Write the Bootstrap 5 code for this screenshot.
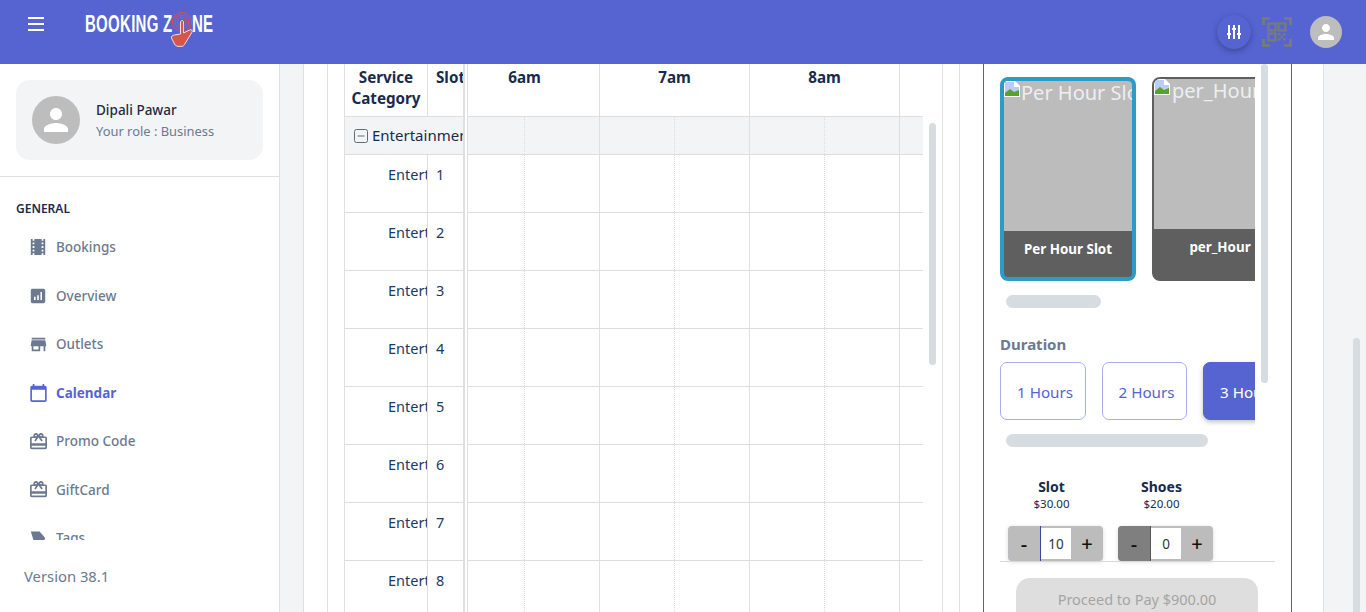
<!DOCTYPE html>
<html lang="en">
<head>
    <meta charset="UTF-8">
    <meta name="viewport" content="width=device-width, initial-scale=1.0">
    <title>Booking Zone</title>
    <link href="https://cdn.jsdelivr.net/npm/bootstrap@5.3.0/dist/css/bootstrap.min.css" rel="stylesheet">
    <style>
        html, body { height: 100%; overflow: hidden; }
        body { font-family: "Noto Sans", "Open Sans", sans-serif; color: #172b4d; background: #f3f4f6; }
        .top-bar { height: 64px; background: #5664d2; padding-left: 28px; padding-right: 24px; flex-shrink: 0; }
        .burger { width: 16px; height: 14px; display: flex; flex-direction: column; justify-content: space-between; margin-top: -17px; }
        .burger span { height: 2px; background: #fff; display: block; }
        .brand { margin-left: 41px; margin-top: -17px; height: 20px; width: 128px; position: relative; color: #fff; font-family: "Liberation Sans", sans-serif; font-size: 23.5px; font-weight: 700; line-height: 20px; }
        .brand-text { position: absolute; top: 0; white-space: nowrap; letter-spacing: .4px; transform: scaleX(.64); transform-origin: left center; }
        .brand-end { left: 107px; }
        .brand svg { position: absolute; left: 84px; top: -3px; }
        .tune-btn { width: 34px; height: 34px; border-radius: 50%; background: #5664d2; box-shadow: 0 2px 6px rgba(0,0,0,.3); }
        .qr-icon { margin-left: 11px; margin-right: 18px; }
        .avatar { background: #bdbdbd; border-radius: 50%; flex-shrink: 0; }
        .avatar-sm { width: 32px; height: 32px; }
        .avatar-md { width: 48px; height: 48px; }
        .page-body { height: 548px; }
        .side { width: 280px; background: #fff; border-right: 1px solid #e0e0e0; flex-shrink: 0; height: 548px; }
        .profile { margin: 16px 16px 16px; height: 80px; border-radius: 14px; background: #f3f4f6; padding: 16px; gap: 16px; }
        .p-name { font-size: 13.5px; font-weight: 500; color: #1f2a44; line-height: 20px; margin-top: 1px; }
        .p-role { font-size: 12.9px; color: #6b7a90; line-height: 22px; }
        .side-title { border-top: 1px solid #e0e0e0; padding: 23px 0 5px 16px; font-size: 12px; font-weight: 600; line-height: 18px; color: #172b4d; }
        .side-menu { height: 317px; overflow: hidden; padding-left: 30px; }
        .side-item { height: 48.5px; font-size: 13.5px; font-weight: 500; color: #6b7a90; }
        .ico-slot { width: 16px; margin-right: 10px; flex-shrink: 0; display: flex; justify-content: center; }
        .ico-slot svg { fill: #6b7a90; flex-shrink: 0; }
        .side-item.active { color: #5664d2; font-weight: 700; }
        .side-item.active svg { fill: #5664d2; }
        .version { padding: 26px 0 0 24px; font-size: 14.8px; line-height: 21px; color: #6b7a90; }
        .main-area { flex-grow: 1; padding-left: 23px; position: relative; overflow: hidden; }
        .main-card { width: 1021px; height: 100%; background: #fff; border-left: 1px solid #e0e0e0; border-right: 1px solid #e0e0e0; padding-left: 23px; }
        .panel-a { width: 616px; border-left: 1px solid #e0e0e0; border-right: 1px solid #e0e0e0; padding-left: 16px; position: relative; flex-shrink: 0; }
        .panel-b { margin-left: 16px; border-left: 1px solid #e0e0e0; padding-left: 23px; flex-grow: 1; position: relative; }
        .sched { width: 579px; border-left: 1px solid #e0e0e0; height: 100%; overflow: hidden; }
        .sched-left { width: 120px; flex-shrink: 0; border-right: 2px solid #e0e0e0; overflow: hidden; }
        .sched-right { width: 456px; margin-left: 2px; border-left: 1px solid #e0e0e0; overflow: hidden; flex-shrink: 0; }
        .head-row { height: 53px; border-bottom: 1px solid #dedede; font-size: 15.2px; font-weight: 700; line-height: 21px; color: #172b4d; }
        .cell-cat { width: 83px; border-right: 1px solid #e0e0e0; flex-shrink: 0; text-align: center; padding-top: 3px; }
        .cell-slot { padding: 3px 0 0 8px; white-space: nowrap; overflow: hidden; flex-grow: 1; }
        .group-row { height: 38px; background: #f3f4f6; border-bottom: 1px solid #dedede; font-size: 15px; white-space: nowrap; overflow: hidden; padding-left: 9px; gap: 4px; }
        .data-row { height: 58px; border-bottom: 1px solid #dedede; font-size: 14.5px; line-height: 20px; color: #1b3a5e; }
        .data-row .cell-cat { text-align: left; padding: 9px 0 0 43px; overflow: hidden; white-space: nowrap; }
        .data-row .cell-slot { padding: 9px 0 0 8px; }
        .time-track { margin-left: -18px; width: 600px; }
        .hour { width: 150px; flex-shrink: 0; border-right: 1px solid #e0e0e0; text-align: center; padding-top: 3px; }
        .half { width: 75px; flex-shrink: 0; }
        .half.dash { border-right: 1px dotted #dcdcdc; }
        .half.solid { border-right: 1px solid #e0e0e0; }
        .group-row.tl, .data-row.tl { padding-left: 0; gap: 0; }
        .bar-v { position: absolute; width: 7px; background: #d6dce0; border-radius: 4px; }
        .table-bar { left: 601px; top: 59px; height: 242px; }
        .page-bar { right: 6px; top: 274px; height: 300px; }
        .box-bar { left: 277px; top: 0; height: 319px; }
        .dark-box { width: 309px; height: 100%; border-left: 1px solid #666; border-right: 1px solid #666; padding-left: 16px; position: relative; overflow: hidden; }
        .h-scroll { width: 255px; overflow: hidden; }
        .card-strip { padding-top: 13px; }
        .type-card { width: 136px; height: 204px; flex-shrink: 0; border-radius: 8px; overflow: hidden; background: #5f5f5f; display: flex; flex-direction: column; }
        .type-card.picked { border: 4px solid #2e9bc6; }
        .type-card.plain { border: 2px solid #5f5f5f; }
        .type-img { background: #bcbcbc; color: #eceff1; font-size: 20px; line-height: 24px; white-space: nowrap; overflow: hidden; height: 150px; flex-shrink: 0; }
        .type-img svg { margin-right: 1px; }
        .plain .type-img svg { margin-right: 2px; }
        .type-name { color: #fff; font-size: 13.4px; font-weight: 700; text-align: center; padding-top: 9px; white-space: nowrap; line-height: 18px; }
        .thumb-h { height: 13px; border-radius: 7px; background: #d6dce0; margin-left: 6px; }
        .thumb-cards { width: 95px; margin-top: 14px; }
        .thumb-dur { width: 202px; margin-top: 8px; }
        .dur-label { font-size: 15px; font-weight: 700; color: #6b7a90; line-height: 20px; margin-top: 26px; }
        .dur-strip { gap: 16px; padding: 8px 0 6px; }
        .dur-btn { height: 58px; width: 85.5px; flex-shrink: 0; border: 1px solid #a9adee; border-radius: 7px; background: #fff; color: #5664d2; font-size: 15.2px; white-space: nowrap; padding: 3px 0 0 16px; text-align: left; }
        .dur-btn.on { background: #5664d2; color: #fff; border-color: #5664d2; box-shadow: 0 2px 5px rgba(0,0,0,.25); }
        .extras { gap: 15px; margin: 30px 0 0 8px; }
        .extra { width: 95px; text-align: center; }
        .extra-name { font-size: 14px; font-weight: 700; line-height: 20px; color: #172b4d; padding-right: 8px; }
        .extra-price { font-size: 11.5px; line-height: 14px; color: #172b4d; padding-right: 8px; }
        .stepper { height: 35px; margin-top: 15px; border-radius: 4px; overflow: hidden; background: #bcbcbc; display: flex; box-shadow: 0 1px 4px rgba(0,0,0,.15); }
        .step-btn { width: 32px; flex-shrink: 0; text-align: center; color: #111; font-size: 20px; font-weight: 500; line-height: 35px; }
        .step-btn.minus { border-right: 1px solid #3a44a8; width: 33px; }
        .step-btn.off { background: #7f7f7f; border-right-color: #555; }
        .step-val { width: 30px; background: #fff; margin: 2px 0; text-align: center; font-size: 13.5px; line-height: 33px; color: #333; }
        .pay-line { position: absolute; left: 16px; width: 275px; top: 497px; border-top: 1px solid #d8d8d8; }
        .pay-btn { position: absolute; left: 32px; width: 242px; top: 514px; height: 52px; background: #dedede; border-radius: 14px; color: #a5a5a5; font-size: 14.5px; text-align: center; padding-top: 11px; }
    </style>
</head>
<body>
<nav class="top-bar d-flex align-items-center">
    <div class="burger"><span></span><span></span><span></span></div>
    <div class="brand">
        <span class="brand-text">BOOKING Z</span>
        <span class="brand-text brand-end">NE</span>
        <svg width="28" height="38" viewBox="0 0 28 38">
            <g fill="none" stroke="#d9534f" stroke-width="1">
                <circle cx="13" cy="11" r="9.500"/><circle cx="13" cy="11" r="7"/><circle cx="13" cy="11" r="4.500"/>
            </g>
            <path d="M11.500 11c0-2 3-2 3 0v11l6-3c2-1 3.500.8 2.500 2.200l-7.500 12.300c-.5 1-1.500 1.800-2.500 1.800h-4c-1.500 0-3-1-3.500-2.300l-3-6c-.5-1.500 1-2.800 3-3l6-1z" fill="#d4574c" stroke="#f3dcdc" stroke-width="1"/>
        </svg>
    </div>
    <div class="ms-auto d-flex align-items-center">
        <div class="tune-btn d-flex align-items-center justify-content-center">
            <svg width="14" height="14" viewBox="0 0 14 14" fill="#fff">
                <rect x="1" y="0" width="2" height="14"/><rect x="6" y="0" width="2" height="14"/><rect x="11" y="0" width="2" height="14"/>
                <rect x="0" y="8" width="4" height="2"/><rect x="5" y="3" width="4" height="2"/><rect x="10" y="8" width="4" height="2"/>
            </svg>
        </div>
        <svg class="qr-icon" width="30" height="30" viewBox="0 0 30 30" fill="none" stroke="#737a85">
            <path d="M1.500 8V1.500H8M22 1.500h6.500V8M28.500 22v6.500H22M8 28.500H1.500V22" stroke-width="3"/>
            <g stroke-width="2.500">
                <rect x="6.500" y="6.500" width="7" height="7"/><rect x="16.500" y="6.500" width="7" height="7"/><rect x="6.500" y="16.500" width="7" height="7"/>
            </g>
            <path d="M16 16h2.500v2.500H16zM21 16h2.500v2.500H21zM18.500 18.500H21V21h-2.500zM16 21h2.500v2.500H16zM21 21h2.500v2.500H21z" fill="#737a85" stroke="none"/>
        </svg>
        <div class="avatar avatar-sm d-flex align-items-center justify-content-center">
            <svg width="24" height="24" viewBox="0 0 24 24" fill="#fff"><path d="M12 12c2.210 0 4-1.790 4-4s-1.790-4-4-4-4 1.790-4 4 1.790 4 4 4zm0 2c-2.670 0-8 1.340-8 4v2h16v-2c0-2.660-5.330-4-8-4z"/></svg>
        </div>
    </div>
</nav>

<div class="page-body d-flex">
    <aside class="side d-flex flex-column">
        <div class="profile d-flex align-items-center">
            <div class="avatar avatar-md d-flex align-items-center justify-content-center">
                <svg width="36" height="36" viewBox="0 0 24 24" fill="#fff"><path d="M12 12c2.210 0 4-1.790 4-4s-1.790-4-4-4-4 1.790-4 4 1.790 4 4 4zm0 2c-2.670 0-8 1.340-8 4v2h16v-2c0-2.660-5.330-4-8-4z"/></svg>
            </div>
            <div>
                <div class="p-name">Dipali Pawar</div>
                <div class="p-role">Your role : Business</div>
            </div>
        </div>
        <div class="side-title">GENERAL</div>
        <div class="side-menu">
            <div class="side-item d-flex align-items-center"><span class="ico-slot"><svg width="18" height="18" viewBox="2 2 20 20"><path d="M18 3v2h-2V3H8v2H6V3H4v18h2v-2h2v2h8v-2h2v2h2V3h-2zM8 17H6v-2h2v2zm0-4H6v-2h2v2zm0-4H6V7h2v2zm10 8h-2v-2h2v2zm0-4h-2v-2h2v2zm0-4h-2V7h2v2z"/></svg></span>Bookings</div>
            <div class="side-item d-flex align-items-center"><span class="ico-slot"><svg width="16" height="16" viewBox="2 2 20 20"><path d="M19 3H5c-1.100 0-2 .9-2 2v14c0 1.100.9 2 2 2h14c1.100 0 2-.9 2-2V5c0-1.100-.9-2-2-2zM9 17H7v-4h2v4zm4 0h-2v-6h2v6zm4 0h-2V7h2v10z"/></svg></span>Overview</div>
            <div class="side-item d-flex align-items-center"><span class="ico-slot"><svg width="17" height="17" viewBox="2 2 20 20"><path d="M20 4H4v2h16V4zm1 10v-2l-1-5H4l-1 5v2h1v6h10v-6h4v6h2v-6h1zm-9 4H6v-4h6v4z"/></svg></span>Outlets</div>
            <div class="side-item active d-flex align-items-center"><span class="ico-slot"><svg width="17" height="18" viewBox="2 1 20 22"><path d="M20 3h-1V1h-2v2H7V1H5v2H4c-1.100 0-2 .9-2 2v16c0 1.100.9 2 2 2h16c1.100 0 2-.9 2-2V5c0-1.100-.9-2-2-2zm0 18H4V8h16v13z"/></svg></span>Calendar</div>
            <div class="side-item d-flex align-items-center"><span class="ico-slot"><svg width="17" height="17" viewBox="2 2 20 20"><path d="M20 6h-2.180c.11-.31.18-.65.18-1 0-1.660-1.340-3-3-3-1.050 0-1.960.54-2.500 1.350l-.5.67-.5-.68C10.960 2.540 10.050 2 9 2 7.340 2 6 3.340 6 5c0 .35.07.69.18 1H4c-1.110 0-1.990.89-1.990 2L2 19c0 1.110.89 2 2 2h16c1.110 0 2-.89 2-2V8c0-1.110-.89-2-2-2zm-5-2c.55 0 1 .45 1 1s-.45 1-1 1-1-.45-1-1 .45-1 1-1zM9 4c.55 0 1 .45 1 1s-.45 1-1 1-1-.45-1-1 .45-1 1-1zm11 15H4v-2h16v2zm0-5H4V8h5.080L7 10.830 8.620 12 11 8.760l1-1.360 1 1.360L15.380 12 17 10.830 14.920 8H20v6z"/></svg></span>Promo Code</div>
            <div class="side-item d-flex align-items-center"><span class="ico-slot"><svg width="17" height="17" viewBox="2 2 20 20"><path d="M20 6h-2.180c.11-.31.18-.65.18-1 0-1.660-1.340-3-3-3-1.050 0-1.960.54-2.500 1.350l-.5.67-.5-.68C10.960 2.540 10.050 2 9 2 7.340 2 6 3.340 6 5c0 .35.07.69.18 1H4c-1.110 0-1.990.89-1.990 2L2 19c0 1.110.89 2 2 2h16c1.110 0 2-.89 2-2V8c0-1.110-.89-2-2-2zm-5-2c.55 0 1 .45 1 1s-.45 1-1 1-1-.45-1-1 .45-1 1-1zM9 4c.55 0 1 .45 1 1s-.45 1-1 1-1-.45-1-1 .45-1 1-1zm11 15H4v-2h16v2zm0-5H4V8h5.080L7 10.830 8.620 12 11 8.760l1-1.360 1 1.360L15.380 12 17 10.830 14.920 8H20v6z"/></svg></span>GiftCard</div>
            <div class="side-item d-flex align-items-center"><span class="ico-slot"><svg width="16" height="16" viewBox="2 2 20 20"><path d="M3 4h11l7 8-3 8H8z"/></svg></span>Tags</div>
        </div>
        <div class="version">Version 38.1</div>
    </aside>

    <main class="main-area">
        <div class="main-card d-flex">
            <section class="panel-a">
                <div class="sched d-flex">
                    <div class="sched-left" id="left-table">
                        <div class="head-row d-flex">
                            <div class="cell-cat">Service Category</div>
                            <div class="cell-slot">Slot</div>
                        </div>
                        <div class="group-row d-flex align-items-center">
                            <svg width="14" height="14" viewBox="0 0 14 14" class="flex-shrink-0"><rect x=".5" y=".5" width="13" height="13" rx="2" fill="none" stroke="#5b6b80"/><rect x="3.500" y="6.500" width="7" height="1" fill="#5b6b80"/></svg>
                            <span>Entertainment</span>
                        </div>
                    </div>
                    <div class="sched-right">
                        <div class="time-track" id="time-track">
                            <div class="head-row d-flex">
                                <div class="hour">6am</div>
                                <div class="hour">7am</div>
                                <div class="hour">8am</div>
                                <div class="hour">9am</div>
                            </div>
                        </div>
                    </div>
                </div>
                <div class="bar-v table-bar"></div>
            </section>

            <section class="panel-b">
                <div class="dark-box">
                    <div class="h-scroll">
                        <div class="card-strip d-flex gap-3">
                            <div class="type-card picked">
                                <div class="type-img">
                                    <svg width="16" height="16" viewBox="0 0 16 16" class="align-top"><path d="M0 0h11l5 5v11H0z" fill="#fff"/><path d="M1 1h9v5h5v9H1z" fill="#b9cdf5"/><path d="M1 15v-3l5-4 4 3 5-2v6z" fill="#5aa02c"/></svg>Per Hour Slot
                                </div>
                                <div class="type-name">Per Hour Slot</div>
                            </div>
                            <div class="type-card plain">
                                <div class="type-img">
                                    <svg width="16" height="16" viewBox="0 0 16 16" class="align-top"><path d="M0 0h11l5 5v11H0z" fill="#fff"/><path d="M1 1h9v5h5v9H1z" fill="#b9cdf5"/><path d="M1 15v-3l5-4 4 3 5-2v6z" fill="#5aa02c"/></svg>per_Hour
                                </div>
                                <div class="type-name">per_Hour</div>
                            </div>
                        </div>
                    </div>
                    <div class="thumb-h thumb-cards"></div>
                    <div class="dur-label">Duration</div>
                    <div class="h-scroll">
                        <div class="dur-strip d-flex">
                            <button class="dur-btn">1 Hours</button>
                            <button class="dur-btn">2 Hours</button>
                            <button class="dur-btn on">3 Hours</button>
                        </div>
                    </div>
                    <div class="thumb-h thumb-dur"></div>
                    <div class="extras d-flex">
                        <div class="extra">
                            <div class="extra-name">Slot</div>
                            <div class="extra-price">$30.00</div>
                            <div class="stepper">
                                <div class="step-btn minus">-</div><div class="step-val">10</div><div class="step-btn">+</div>
                            </div>
                        </div>
                        <div class="extra">
                            <div class="extra-name">Shoes</div>
                            <div class="extra-price">$20.00</div>
                            <div class="stepper">
                                <div class="step-btn minus off">-</div><div class="step-val">0</div><div class="step-btn">+</div>
                            </div>
                        </div>
                    </div>
                    <div class="pay-line"></div>
                    <div class="pay-btn">Proceed to Pay $900.00</div>
                    <div class="bar-v box-bar"></div>
                </div>
            </section>
        </div>
        <div class="bar-v page-bar"></div>
    </main>
</div>

<script>
    const leftTable = document.getElementById('left-table');
    const track = document.getElementById('time-track');

    function halfCells() {
        let html = '';
        for (let i = 0; i < 4; i++) {
            html += '<div class="half dash"></div><div class="half solid"></div>';
        }
        return html;
    }

    track.insertAdjacentHTML('beforeend', `<div class="group-row tl d-flex">${halfCells()}</div>`);
    for (let i = 1; i <= 8; i++) {
        leftTable.insertAdjacentHTML('beforeend',
            `<div class="data-row d-flex"><div class="cell-cat">Entertainment</div><div class="cell-slot">${i}</div></div>`);
        track.insertAdjacentHTML('beforeend', `<div class="data-row tl d-flex">${halfCells()}</div>`);
    }
</script>
<script src="https://cdn.jsdelivr.net/npm/bootstrap@5.3.0/dist/js/bootstrap.bundle.min.js"></script>
</body>
</html>
